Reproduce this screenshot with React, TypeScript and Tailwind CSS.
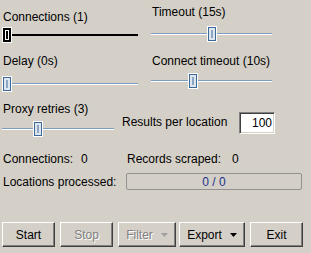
import React from "react";

function Thumb({ focused }: { focused?: boolean }) {
  if (focused) {
    return (
      <svg width="10" height="16" viewBox="0 0 10 16" className="block">
        <rect x="0" y="0" width="10" height="16" fill="#ffffff" />
        <rect x="1" y="1" width="8" height="14" fill="#000000" />
        <rect x="3.5" y="3.5" width="3" height="9" fill="#000000" stroke="#ffffff" />
      </svg>
    );
  }
  return (
    <svg width="10" height="16" viewBox="0 0 10 16" className="block">
      <rect x="0" y="0" width="10" height="16" fill="#ffffff" />
      <rect x="1" y="1" width="8" height="14" fill="#3d6898" />
      <rect x="2" y="2" width="6" height="12" fill="#dde5ef" />
      <rect x="4.5" y="4" width="1" height="8" fill="#3d6898" />
    </svg>
  );
}

function Slider({
  className,
  value,
  min,
  max,
  span,
  focused,
}: {
  className: string;
  value: number;
  min: number;
  max: number;
  span: number;
  focused?: boolean;
}) {
  const left = Math.round(((value - min) / (max - min)) * (span - 10));
  return (
    <div className={`relative h-4 ${className}`}>
      {focused ? (
        <div className="absolute left-0 right-0 top-[7px] h-[2px] bg-black" />
      ) : (
        <>
          <div className="absolute left-0 right-0 top-[7px] h-px bg-[#7c9cc2]" />
          <div className="absolute left-0 right-0 top-[8px] h-px bg-white" />
        </>
      )}
      <div className="absolute top-0" style={{ left }}>
        <Thumb focused={focused} />
      </div>
    </div>
  );
}

function Arrow({ disabled }: { disabled?: boolean }) {
  return (
    <svg width="7" height="4" viewBox="0 0 7 4" className="block">
      <polygon points="0,0 7,0 3.5,4" fill={disabled ? "#a0a0a0" : "#000000"} />
    </svg>
  );
}

function Btn({
  className,
  disabled,
  children,
}: {
  className: string;
  disabled?: boolean;
  children: React.ReactNode;
}) {
  return (
    <button
      type="button"
      className={`flex h-[25px] items-center justify-center border border-t-white border-l-white border-r-[#404040] border-b-[#404040] bg-[#d4d0c8] shadow-[inset_-1px_-1px_0_#808080] ${
        disabled ? "text-[#808080] [text-shadow:1px_1px_0_#ffffff]" : "text-black"
      } ${className}`}
    >
      {children}
    </button>
  );
}

export default function App() {
  return (
    <div className="h-[253px] w-[311px] overflow-hidden bg-[#d4d0c8] font-['Liberation_Sans',Arial,sans-serif] text-[12px] leading-[14px] text-black">
      <div className="flex">
        <div className="flex w-[149px] flex-col pl-[2px]">
          <span className="mt-[10px] pl-px">Connections (1)</span>
          <Slider className="mt-[3px] w-[136px]" value={1} min={1} max={50} span={136} focused />
          <span className="mt-[11px] pl-px">Delay (0s)</span>
          <Slider className="mt-[8px] w-[136px]" value={0} min={0} max={10} span={136} />
        </div>
        <div className="flex flex-col pl-[2px]">
          <span className="mt-[5px] pl-px">Timeout (15s)</span>
          <Slider className="mt-[7px] w-[121px]" value={15} min={5} max={25} span={121} />
          <span className="mt-[12px] pl-px">Connect timeout (10s)</span>
          <Slider className="mt-[5px] w-[121px]" value={10} min={5} max={20} span={121} />
        </div>
      </div>

      <div className="flex items-start">
        <div className="flex w-[122px] shrink-0 flex-col pl-[2px]">
          <span className="mt-[10px] pl-px">Proxy retries (3)</span>
          <Slider className="mt-[5px] w-[112px]" value={3} min={0} max={10} span={112} />
        </div>
        <span className="mt-[23px] w-[117px] min-w-0 shrink-0 whitespace-nowrap">Results per location</span>
        <div className="mt-[20px] flex h-[22px] w-[36px] shrink-0 items-center justify-end border border-t-[#808080] border-l-[#808080] border-r-white border-b-white bg-white pr-[2px] shadow-[inset_1px_1px_0_#404040,inset_-1px_-1px_0_#d4d0c8]">
          100
        </div>
      </div>

      <div className="mt-[15px] flex">
        <div className="flex w-[127px] shrink-0 pl-[3px]">
          <span className="w-[78px] shrink-0 whitespace-nowrap">Connections:</span>
          <span>0</span>
        </div>
        <div className="flex">
          <span className="w-[105px] shrink-0 whitespace-nowrap">Records scraped:</span>
          <span>0</span>
        </div>
      </div>

      <div className="mt-[7px] flex items-center">
        <span className="w-[126px] shrink-0 whitespace-nowrap pl-[3px]">Locations processed:</span>
        <div className="flex h-[17px] w-[176px] items-center justify-center rounded-[2px] border border-[#929292] text-[#22308a]">
          0 / 0
        </div>
      </div>

      <div className="mt-[32px] flex pl-[2px]">
        <Btn className="w-[53px]">Start</Btn>
        <Btn className="ml-[5px] w-[53px]" disabled>
          Stop
        </Btn>
        <Btn className="ml-[5px] w-[58px] gap-[8px]" disabled>
          <span>Filter</span>
          <Arrow disabled />
        </Btn>
        <Btn className="ml-[3px] w-[66px] gap-[8px]">
          <span>Export</span>
          <Arrow />
        </Btn>
        <Btn className="ml-[5px] w-[53px]">Exit</Btn>
      </div>
    </div>
  );
}
